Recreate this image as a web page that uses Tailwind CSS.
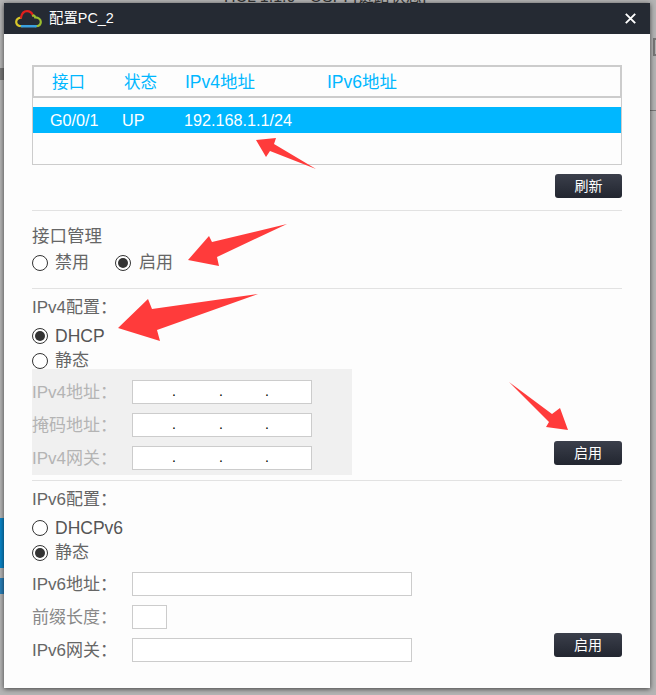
<!DOCTYPE html>
<html lang="zh">
<head>
    <meta charset="UTF-8">
    <title>配置PC_2</title>
    <script src="https://cdn.jsdelivr.net/npm/@tailwindcss/browser@4"></script>
</head>
<body class="relative w-[656px] h-[695px] overflow-hidden bg-[#b4b4b4] font-['Liberation_Sans','Noto_Sans_CJK_SC',sans-serif] text-[#666]">
    <!-- 背后的窗口，只露出一点 -->
    <div class="absolute left-[224px] top-[-12px] text-[16px] leading-[18px] whitespace-nowrap text-[#333]">HCL 1.1.0 - OSPF[链路状态]</div>
    <div class="absolute left-0 top-[518px] w-[4px] h-[50px] bg-[#0a84c6]"></div>
    <div class="absolute left-0 top-[578px] w-[4px] h-[16px] bg-[#2a7fb8]"></div>
    <div class="absolute left-0 top-[68px] w-[4px] h-[12px] bg-[#777]"></div>
    <div class="absolute left-[653px] top-[38px] w-[3px] h-[18px] border-2 border-r-0 border-[#777]"></div>
    <div class="absolute left-[650px] top-[110px] w-[6px] h-px bg-[#777]"></div>

    <!-- 对话框 -->
    <div class="relative ml-[4px] w-[646px] h-[685px] top-[3px] bg-[#fdfdfd] shadow-[0_1px_5px_rgba(0,0,0,0.65)]">
        <header class="flex items-center h-[31px] bg-[#252a33] text-white text-[14px] pl-[11px] pr-[14px]">
            <svg class="w-[27px] h-[18px]" viewBox="0 0 27 18" fill="none" stroke-width="2.2" stroke-linecap="round">
                <path d="M7 16.2 C3.5 16.2 1.2 14.6 1.2 12 C1.2 9.4 3.2 7.6 6 7.6" stroke="#d8c62a"/>
                <path d="M6 7.6 C6.8 3.4 9.2 1.2 12 1.2 C14.8 1.2 17 3 18 5.6" stroke="#e0201c"/>
                <path d="M18 5.6 C18.6 5.2 19.8 5.6 20.2 7.4 C23.6 7.4 25.8 9.4 25.8 12 C25.8 14.6 23.6 16.2 20.6 16.2" stroke="#9cbe2e"/>
                <path d="M7 16.2 H20.6" stroke="#3aa2e0" stroke-width="2.6"/>
            </svg>
            <span class="ml-[7px] text-[14.4px]">配置PC_2</span>
            <svg class="ml-auto w-[11px] h-[11px]" viewBox="0 0 11 11" stroke="#fff" stroke-width="1.9"><path d="M0.8 0.8 L10.2 10.2 M10.2 0.8 L0.8 10.2"/></svg>
        </header>

        <div class="px-[28px]">
            <!-- 接口表 -->
            <section class="mt-[31px] h-[100px] border border-t-0 border-[#ccc]">
                <div class="grid grid-cols-[72px_61px_142px_1fr] h-[33px] -mx-px border-2 border-[#ccc] items-center pl-[18px] pt-px text-[#00b7ff] text-[16.5px]">
                    <span>接口</span><span>状态</span><span class="text-[17.5px]">IPv4地址</span><span class="text-[17.5px]">IPv6地址</span>
                </div>
                <div class="grid grid-cols-[72px_62px_1fr] mt-[9px] h-[26px] items-center pl-[17px] pt-px bg-[#00b7ff] text-white text-[16.2px]">
                    <span>G0/0/1</span><span>UP</span><span>192.168.1.1/24</span>
                </div>
            </section>
            <div class="flex justify-end mt-[9px] h-[24px]">
                <button class="w-[67px] h-[24px] rounded-[3px] bg-gradient-to-b from-[#3b3f4b] to-[#222630] text-white text-[14px]">刷新</button>
            </div>

            <!-- 接口管理 -->
            <section class="mt-[12px] h-[78px] border-t border-[#e2e2e2] pt-[13px]">
                <div class="h-[24px] leading-[24px] text-[17.5px]">接口管理</div>
                <div class="flex items-center mt-[3px] h-[24px] text-[17px]">
                    <span class="w-4 h-4 rounded-full border border-[#333] bg-white"></span>
                    <span class="ml-[7px] w-[60px]">禁用</span>
                    <span class="w-4 h-4 rounded-full border border-[#333] bg-white flex items-center justify-center"><span class="w-[10px] h-[10px] rounded-full bg-[#333]"></span></span>
                    <span class="ml-[8px]">启用</span>
                </div>
            </section>

            <!-- IPv4 -->
            <section class="flex justify-between h-[192px] border-t border-[#e2e2e2]">
                <div class="w-[320px]">
                    <div class="mt-[6px] h-[22px] leading-[22px] text-[17px]">IPv4配置<span class="font-['Noto_Sans_CJK_TC']">：</span></div>
                    <div class="flex items-center mt-[7px] h-[24px] text-[17.5px] text-[#555]">
                        <span class="w-4 h-4 rounded-full border border-[#333] bg-white flex items-center justify-center"><span class="w-[10px] h-[10px] rounded-full bg-[#333]"></span></span>
                        <span class="ml-[7px]">DHCP</span>
                    </div>
                    <div class="flex items-center mt-px h-[24px] text-[17px]">
                        <span class="w-4 h-4 rounded-full border border-[#333] bg-white"></span>
                        <span class="ml-[7px]">静态</span>
                    </div>
                    <div class="mt-[-4px] h-[106px] bg-[#f0f0f0] pt-[11px] flex flex-col gap-[9px] text-[17px] text-[#b4b4b4]">
                        <div class="flex items-center h-[24px]"><span class="w-[100px]">IPv4地址<span class="font-['Noto_Sans_CJK_TC']">：</span></span><div class="w-[180px] h-[24px] border border-[#ccc] bg-white grid grid-cols-[1fr_47px_46px_46px] text-black text-[14px] leading-[21px]"><span></span><span>.</span><span>.</span><span>.</span></div></div>
                        <div class="flex items-center h-[24px]"><span class="w-[100px]">掩码地址<span class="font-['Noto_Sans_CJK_TC']">：</span></span><div class="w-[180px] h-[24px] border border-[#ccc] bg-white grid grid-cols-[1fr_47px_46px_46px] text-black text-[14px] leading-[21px]"><span></span><span>.</span><span>.</span><span>.</span></div></div>
                        <div class="flex items-center h-[24px]"><span class="w-[100px]">IPv4网关<span class="font-['Noto_Sans_CJK_TC']">：</span></span><div class="w-[180px] h-[24px] border border-[#ccc] bg-white grid grid-cols-[1fr_47px_46px_46px] text-black text-[14px] leading-[21px]"><span></span><span>.</span><span>.</span><span>.</span></div></div>
                    </div>
                </div>
                <button class="self-end mb-[15px] w-[68px] h-[24px] rounded-[3px] bg-gradient-to-b from-[#3b3f4b] to-[#222630] text-white text-[14px]">启用</button>
            </section>

            <!-- IPv6 -->
            <section class="flex justify-between border-t border-[#e2e2e2]">
                <div>
                    <div class="mt-[6px] h-[22px] leading-[22px] text-[17px]">IPv6配置<span class="font-['Noto_Sans_CJK_TC']">：</span></div>
                    <div class="flex items-center mt-[7px] h-[24px] text-[17.5px] text-[#555]">
                        <span class="w-4 h-4 rounded-full border border-[#333] bg-white"></span>
                        <span class="ml-[7px]">DHCPv6</span>
                    </div>
                    <div class="flex items-center mt-px h-[24px] text-[17px]">
                        <span class="w-4 h-4 rounded-full border border-[#333] bg-white flex items-center justify-center"><span class="w-[10px] h-[10px] rounded-full bg-[#333]"></span></span>
                        <span class="ml-[7px]">静态</span>
                    </div>
                    <div class="mt-[7px] flex flex-col gap-[9px] text-[17px]">
                        <div class="flex items-center h-[24px]"><span class="w-[100px]">IPv6地址<span class="font-['Noto_Sans_CJK_TC']">：</span></span><div class="w-[280px] h-[24px] border border-[#ccc] bg-white"></div></div>
                        <div class="flex items-center h-[24px]"><span class="w-[100px] text-[#888]">前缀长度<span class="font-['Noto_Sans_CJK_TC']">：</span></span><div class="w-[35px] h-[24px] border border-[#ccc] bg-white"></div></div>
                        <div class="flex items-center h-[24px]"><span class="w-[100px]">IPv6网关<span class="font-['Noto_Sans_CJK_TC']">：</span></span><div class="w-[280px] h-[24px] border border-[#ccc] bg-white"></div></div>
                    </div>
                </div>
                <button class="self-end mb-[5px] w-[68px] h-[24px] rounded-[3px] bg-gradient-to-b from-[#3b3f4b] to-[#222630] text-white text-[14px]">启用</button>
            </section>
        </div>
    </div>

    <!-- 红色箭头标注 -->
    <svg class="absolute left-0 top-0 w-[656px] h-[695px] pointer-events-none" viewBox="0 0 656 695" fill="#ff3b3b">
        <polygon points="256,140 276,138 274,144 316,169 270,151 266,157"/>
        <polygon points="188,260 209,236 212,242 287,224 217,257 219,266"/>
        <polygon points="118,328 148,299 152,309 258,294 157,330 160,341"/>
        <polygon points="509,382 552,414 560,408 568,430 546,427 549,422"/>
    </svg>
</body>
</html>
